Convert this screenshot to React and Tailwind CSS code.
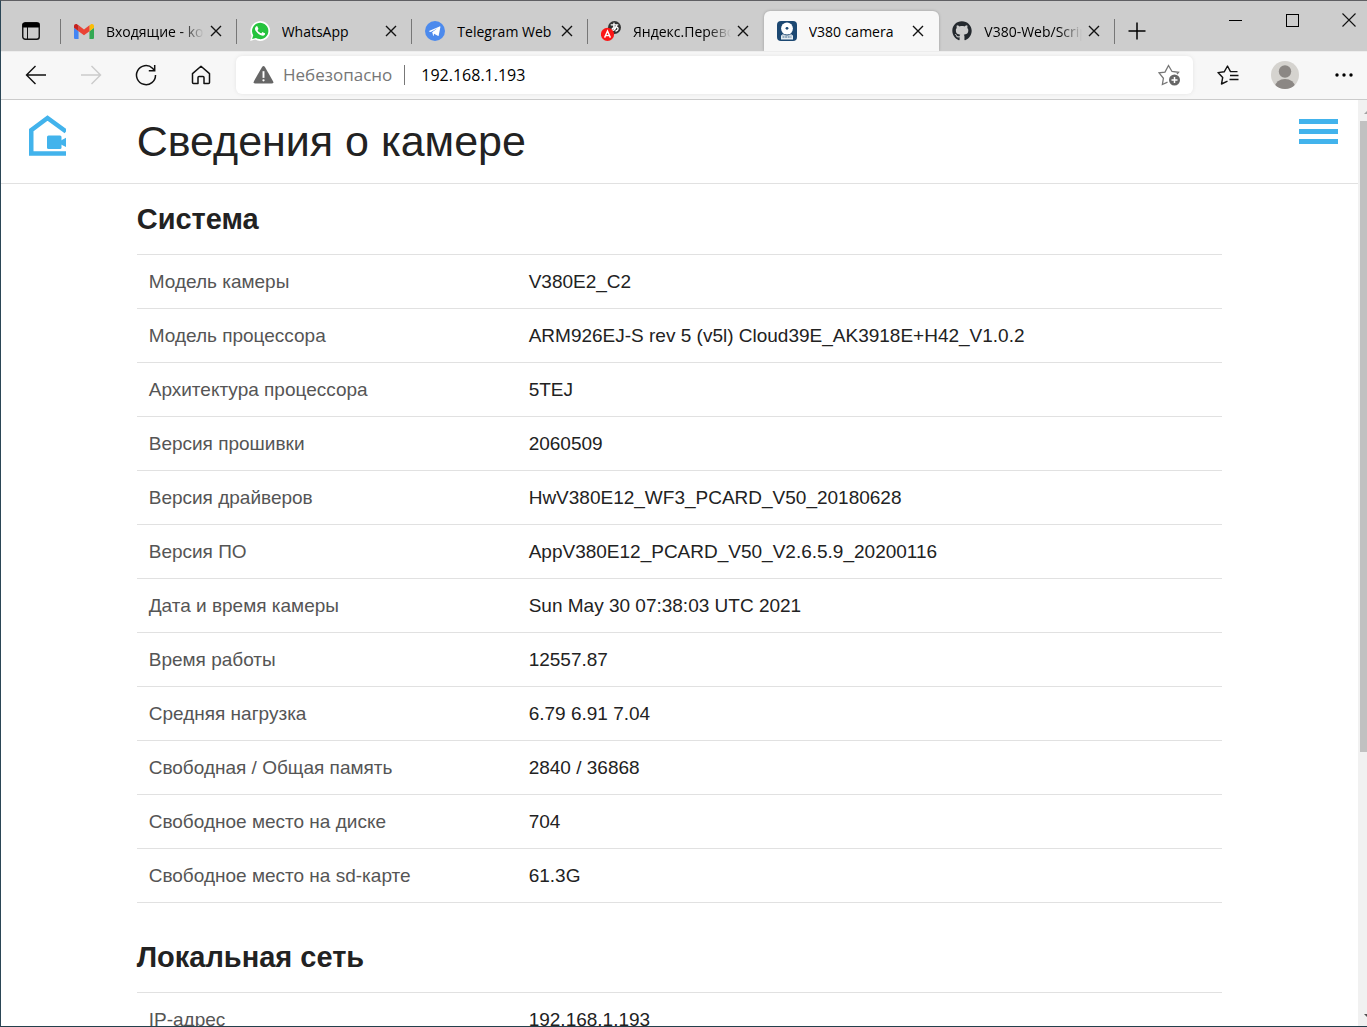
import React from "react";
import { FaGithub } from "react-icons/fa";

function GmailIcon() {
  return (
    <svg viewBox="52 42 88 66" className="h-[15px] w-5">
      <path fill="#4285f4" d="M58 108h14V74L52 59v43c0 3.32 2.69 6 6 6" />
      <path fill="#34a853" d="M120 108h14c3.32 0 6-2.69 6-6V59l-20 15" />
      <path fill="#fbbc04" d="M120 48v26l20-15v-8c0-7.42-8.47-11.65-14.4-7.2" />
      <path fill="#ea4335" d="M72 74V48l24 18 24-18v26L96 92" />
      <path fill="#c5221f" d="M52 51v8l20 15V48l-5.6-4.2c-5.94-4.45-14.4-.22-14.4 7.2" />
    </svg>
  );
}

function WhatsAppIcon() {
  return (
    <svg viewBox="0 0 24 24" className="size-5">
      <path fill="#fff" d="M.2 24l1.7-6.2A11.9 11.9 0 1 1 6.3 22.3z" />
      <path fill="#25c33d" d="M2.6 21.5l1.3-4.4A9.8 9.8 0 1 1 7.1 20.3z" />
      <path
        fill="#fff"
        d="M17.472 14.382c-.297-.149-1.758-.867-2.03-.967-.273-.099-.471-.148-.67.15-.197.297-.767.966-.94 1.164-.173.199-.347.223-.644.075-.297-.15-1.255-.463-2.39-1.475-.883-.788-1.48-1.761-1.653-2.059-.173-.297-.018-.458.13-.606.134-.133.298-.347.446-.52.149-.174.198-.298.298-.497.099-.198.05-.371-.025-.52-.075-.149-.669-1.612-.916-2.207-.242-.579-.487-.5-.669-.51-.173-.008-.371-.01-.57-.01-.198 0-.52.074-.792.372-.272.297-1.04 1.016-1.04 2.479 0 1.462 1.065 2.875 1.213 3.074.149.198 2.096 3.2 5.077 4.487.709.306 1.262.489 1.694.625.712.227 1.36.195 1.871.118.571-.085 1.758-.719 2.006-1.413.248-.694.248-1.289.173-1.413-.074-.124-.272-.198-.57-.347z"
      />
    </svg>
  );
}

function TelegramIcon() {
  return (
    <svg viewBox="0 0 20 20" className="size-5">
      <circle cx="10" cy="10" r="10" fill="#4c8aed" />
      <path fill="#fff" d="M4 9.9L14.6 5.4c.6-.2.9.1.8.7l-1.7 8.3c-.1.6-.5.7-1 .4L7.3 11.7 12.6 7.2 5.8 11 4.2 10.5c-.5-.2-.5-.4-.2-.6z" />
      <path fill="#fff" d="M7.3 11.3l5.3-4.1-3.6 5.3-.2 2.3c-.4.1-.7-.1-.8-.5z" />
    </svg>
  );
}

function TranslateIcon() {
  return (
    <svg viewBox="0 0 20 20" className="size-5">
      <circle cx="13.5" cy="6.5" r="6.5" fill="#333" />
      <g stroke="#fff" strokeWidth="1.3" fill="none" strokeLinecap="round">
        <path d="M10.2 3.8h6.6M13 2.2c-.4 2.5-.3 4.5.3 6.600M15.5 5c-.8 2.5-2.500 4.500-4 4.300-1.500-.5.5-3.600 3.200-3.500 3.300.2 3 3.500.3 4.200" />
      </g>
      <circle cx="6.5" cy="13.4" r="6.6" fill="#fb1616" />
      <path d="M3.6 16.6L6.5 10l2.9 6.6M4.6 14.6h3.8" stroke="#fff" strokeWidth="1.400" fill="none" />
    </svg>
  );
}

function CameraFavicon() {
  return (
    <svg viewBox="0 0 20 20" className="size-5">
      <rect width="20" height="20" rx="4" fill="#1c4872" />
      <path d="M5.500 11.500h9v3h-9z" fill="#fff" />
      <path d="M4 14.200h12v4.300H4z" fill="#e6edf2" />
      <circle cx="10" cy="7.500" r="5.900" fill="#fff" />
      <path d="M5 12.300q5 3.400 10 0" stroke="#1c4872" strokeWidth="1" fill="none" />
      <circle cx="10" cy="7.300" r="1.400" fill="#1c4872" />
      <path d="M5.500 16h9" stroke="#7795ad" strokeWidth="1.400" strokeDasharray="2 .6" />
    </svg>
  );
}

function GitHubIcon() {
  return <FaGithub className="size-5 text-[#24292e]" />;
}

const tabs = [
  { title: "Входящие - kolya", Icon: GmailIcon },
  { title: "WhatsApp", Icon: WhatsAppIcon },
  { title: "Telegram Web", Icon: TelegramIcon },
  { title: "Яндекс.Переводчик", Icon: TranslateIcon, last: true },
  { title: "V380 camera", Icon: CameraFavicon, active: true },
  { title: "V380-Web/Scripts", Icon: GitHubIcon },
];

function Tab({ title, Icon, active, last }) {
  const fades = title.length > 14;
  return (
    <div
      className={
        active
          ? "relative flex min-w-0 items-center rounded-t-md bg-[#f7f7f7] pr-[11px] pl-[13px] shadow-[0_0_3px_rgba(0,0,0,0.25)] [clip-path:inset(-4px_-4px_0_-4px)]"
          : "relative flex min-w-0 items-center pr-[11px] pl-[13px]"
      }
    >
      <button type="button" className="flex h-full min-w-0 flex-1 items-center gap-3">
        <span className="flex shrink-0">
          <Icon />
        </span>
        <span
          className={
            fades
              ? "min-w-0 flex-1 overflow-hidden text-left text-[14px] whitespace-nowrap [mask-image:linear-gradient(to_right,#000_75%,transparent_98%)]"
              : "min-w-0 flex-1 overflow-hidden text-left text-[14px] whitespace-nowrap"
          }
        >
          {title}
        </span>
      </button>
      <button type="button" aria-label={"Закрыть " + title} className="flex size-5 shrink-0 items-center justify-center">
        <svg viewBox="0 0 12 12" className="size-3" stroke="#111" strokeWidth="1.400">
          <path d="M1 1l10 10M11 1L1 11" />
        </svg>
      </button>
      {!active && !last && <span className="absolute top-2 right-0 h-[25px] w-px bg-[#777]" />}
    </div>
  );
}

function TabBar() {
  return (
    <div className="flex h-[50px] shrink-0 bg-[#cdcdcd]">
      <button type="button" aria-label="Меню вкладок" className="mt-[10px] flex w-[60px] shrink-0 items-center justify-center">
        <svg viewBox="0 0 18 18" className="size-[18px]" fill="none" stroke="#111">
          <rect x=".75" y=".75" width="16.500" height="16.500" rx="2.500" strokeWidth="1.400" />
          <path d="M1 1.500h16v3.500H1z" fill="#000" stroke="#000" />
          <path d="M5.500 5v12" />
        </svg>
      </button>
      <div className="relative mt-[10px] grid max-w-[1054px] flex-1 grid-cols-6">
        <span className="absolute top-2 left-0 h-[25px] w-px -translate-x-px bg-[#777]" />
        {tabs.map((t) => (
          <Tab key={t.title} {...t} />
        ))}
      </div>
      <button type="button" aria-label="Новая вкладка" className="mt-[10px] flex w-11 shrink-0 items-center justify-center">
        <svg viewBox="0 0 18 18" className="size-[18px]" stroke="#000" strokeWidth="1.500">
          <path d="M9 .5v17M.5 9h17" />
        </svg>
      </button>
      <div className="ml-auto flex h-[38px] shrink-0">
        <button type="button" aria-label="Свернуть" className="flex w-[57px] items-center justify-center">
          <span className="h-px w-[13px] bg-black" />
        </button>
        <button type="button" aria-label="Развернуть" className="flex w-[57px] items-center justify-center">
          <span className="size-[13px] border border-black" />
        </button>
        <button type="button" aria-label="Закрыть окно" className="flex w-[46px] items-center justify-end pr-[11px]">
          <svg viewBox="0 0 14 14" className="size-[14px]" stroke="#111" strokeWidth="1.100">
            <path d="M.5 .5l13 13M13.500 .5l-13 13" />
          </svg>
        </button>
      </div>
    </div>
  );
}

function NavButton({ label, children }) {
  return (
    <button type="button" aria-label={label} className="flex h-full w-[55px] shrink-0 items-center justify-center">
      {children}
    </button>
  );
}

function Toolbar() {
  return (
    <div className="flex h-[49px] shrink-0 items-center border-t border-b border-t-[#ededed] border-b-[#cbcbcb] bg-[#f7f7f7] pb-px pl-[7px]">
      <NavButton label="Назад">
        <svg viewBox="0 0 22 22" className="size-[22px]" fill="none" stroke="#111" strokeWidth="1.400">
          <path d="M21 11H1.500M10.500 2L1.500 11l9 9" />
        </svg>
      </NavButton>
      <NavButton label="Вперёд">
        <svg viewBox="0 0 22 22" className="size-[22px]" fill="none" stroke="#cbcbcb" strokeWidth="1.400">
          <path d="M1 11h19.500M11.500 2l9 9-9 9" />
        </svg>
      </NavButton>
      <NavButton label="Обновить">
        <svg viewBox="0 0 22 22" className="size-[22px]" fill="none" stroke="#111" strokeWidth="1.500">
          <path d="M20.500 11A9.500 9.500 0 1 1 17.500 4.200l2 2.200M19.700 1v5.800h-5.900" />
        </svg>
      </NavButton>
      <NavButton label="Домой">
        <svg viewBox="0 0 20 20" className="size-5" fill="none" stroke="#111" strokeWidth="1.500" strokeLinejoin="round">
          <path d="M1.500 8.600L10 1.200l8.500 7.400v9q0 1-1 1H13v-6q0-1-1-1H8q-1 0-1 1v6H2.500q-1 0-1-1z" />
        </svg>
      </NavButton>
      <div className="ml-2 flex h-[38px] min-w-0 flex-1 items-center rounded-md bg-white pr-3 pb-px pl-[17px] shadow-[0_0_4px_rgba(0,0,0,0.08)]">
        <svg viewBox="0 0 22 20" className="h-5 w-[21px] shrink-0">
          <path d="M9.500 1.500q1.500-2 3 0l8.500 15q1 2.500-1.500 2.500h-17q-2.500 0-1.500-2.500z" fill="#666" />
          <path d="M11 6v7" stroke="#fff" strokeWidth="2" />
          <circle cx="11" cy="15.600" r="1.200" fill="#fff" />
        </svg>
        <label htmlFor="address" className="ml-[9px] text-[17px] text-[#767676]">
          Небезопасно
        </label>
        <span className="ml-3 h-5 w-px bg-[#777]" />
        <input
          id="address"
          type="text"
          defaultValue="192.168.1.193"
          className="ml-4 min-w-0 flex-1 bg-transparent text-[16px] text-black outline-none"
        />
        <button type="button" aria-label="Добавить в избранное" className="flex">
          <svg viewBox="0 0 23 22" className="h-[22px] w-[23px]" fill="none">
            <path d="M9.500 18.200l-5.100 2.300 1-6.200L1 8.800l6-.7 3.500-6.600 3.500 6 6.500.8-1.500 1.700" stroke="#767676" strokeWidth="1.300" />
            <circle cx="16.500" cy="16" r="5.500" fill="#666" />
            <path d="M16.500 13v6M13.500 16h6" stroke="#fff" strokeWidth="1.500" />
          </svg>
        </button>
      </div>
      <div className="flex shrink-0 items-center gap-9 pr-[14px] pl-6">
        <button type="button" aria-label="Избранное" className="flex">
          <svg viewBox="0 0 22 20" className="h-5 w-[22px]" fill="none" stroke="#111" strokeWidth="1.400">
            <path d="M10.500 16.200l-6 2.800 1.200-6.500L1 7.600l6.200-.8L10.500 1l3 5.600h7" strokeLinejoin="round" />
            <path d="M13 10.500h8.500M12.500 14.500h9" />
          </svg>
        </button>
        <button type="button" aria-label="Профиль" className="-ml-1 flex">
          <svg viewBox="0 0 28 28" className="size-7">
            <clipPath id="avatar">
              <circle cx="14" cy="14" r="14" />
            </clipPath>
            <g clipPath="url(#avatar)">
              <path d="M0 0h28v28H0z" fill="#d5d3cf" />
              <circle cx="14" cy="10.500" r="6.200" fill="#8b8784" />
              <ellipse cx="14" cy="26" rx="10" ry="8" fill="#8b8784" />
            </g>
          </svg>
        </button>
        <button type="button" aria-label="Настройки" className="flex">
          <svg viewBox="0 0 18 4" className="h-1 w-[18px]" fill="#000">
            <circle cx="2" cy="2" r="1.700" />
            <circle cx="9" cy="2" r="1.700" />
            <circle cx="16" cy="2" r="1.700" />
          </svg>
        </button>
      </div>
    </div>
  );
}

const system = [
  ["Модель камеры", "V380E2_C2"],
  ["Модель процессора", "ARM926EJ-S rev 5 (v5l) Cloud39E_AK3918E+H42_V1.0.2"],
  ["Архитектура процессора", "5TEJ"],
  ["Версия прошивки", "2060509"],
  ["Версия драйверов", "HwV380E12_WF3_PCARD_V50_20180628"],
  ["Версия ПО", "AppV380E12_PCARD_V50_V2.6.5.9_20200116"],
  ["Дата и время камеры", "Sun May 30 07:38:03 UTC 2021"],
  ["Время работы", "12557.87"],
  ["Средняя нагрузка", "6.79 6.91 7.04"],
  ["Свободная / Общая память", "2840 / 36868"],
  ["Свободное место на диске", "704"],
  ["Свободное место на sd-карте", "61.3G"],
];

const network = [["IP-адрес", "192.168.1.193"]];

function Section({ id, title, rows }) {
  return (
    <section aria-labelledby={id} className="mb-[19px]">
      <h2 id={id} className="flex h-[70px] items-center pt-0.5 text-[29px] font-bold">
        {title}
      </h2>
      <table className="w-full table-fixed border-separate border-spacing-0 border-b border-[#e1e1e1] text-[19px]">
        <tbody>
          {rows.map(([name, value]) => (
            <tr key={name} className="h-[54px]">
              <th scope="row" className="w-[35%] border-t border-[#e1e1e1] pt-0.5 pl-3 text-left font-normal text-[#555]">
                {name}
              </th>
              <td className="border-t border-[#e1e1e1] pt-0.5 pl-3 text-[#222]">{value}</td>
            </tr>
          ))}
        </tbody>
      </table>
    </section>
  );
}

function Page() {
  return (
    <div className="flex min-h-0 flex-1 bg-white font-['Liberation_Sans',Arial,sans-serif] text-[#222]">
      <main className="min-w-0 flex-1 overflow-hidden">
        <header className="grid h-[84px] grid-cols-[1fr_8fr_1fr] border-b border-[#e1e1e1]">
          <a href="#home" aria-label="Главная" className="mt-[15px] ml-7 self-start">
            <svg viewBox="0 0 37 42" className="h-[42px] w-[37px]">
              <path d="M37 38.500H2.200V15.200L18.500 3 37 16.500" fill="none" stroke="#42b3ec" strokeWidth="4.600" />
              <rect x="18" y="20.500" width="14.500" height="13.500" rx="1.500" fill="#42b3ec" />
              <path d="M31 26l6-3.300v9.200L31 29z" fill="#42b3ec" />
            </svg>
          </a>
          <h1 className="flex items-center text-[43px] leading-none whitespace-nowrap">Сведения о камере</h1>
          <button type="button" aria-label="Меню" className="mt-[19px] mr-5 flex flex-col gap-[5px] self-start justify-self-end">
            <span className="h-[5px] w-[39px] bg-[#42b3ec]" />
            <span className="h-[5px] w-[39px] bg-[#42b3ec]" />
            <span className="h-[5px] w-[39px] bg-[#42b3ec]" />
          </button>
        </header>
        <div className="mx-auto w-4/5">
          <Section id="system" title="Система" rows={system} />
          <Section id="network" title="Локальная сеть" rows={network} />
        </div>
      </main>
      <div aria-hidden="true" className="flex w-[9px] shrink-0 flex-col overflow-hidden bg-[#f1f1f1] pl-[2px]">
        <svg viewBox="0 0 17 21" className="h-[21px] w-[17px] shrink-0">
          <path d="M4 14l5-5 5 5z" fill="#a3a3a3" />
        </svg>
        <div className="flex-[5] bg-[#c1c1c1]" />
        <div className="flex-[2]" />
        <svg viewBox="0 0 17 21" className="h-[21px] w-[17px] shrink-0">
          <path d="M4 9l5 5 5-5z" fill="#505050" />
        </svg>
      </div>
    </div>
  );
}

export default function App() {
  return (
    <div className="flex h-screen flex-col overflow-hidden border-t border-b border-l border-t-[#5f5f63] border-b-[#24404c] border-l-[#2b4656] font-['Open_Sans','Noto_Sans',sans-serif] text-black">
      <TabBar />
      <Toolbar />
      <Page />
    </div>
  );
}
